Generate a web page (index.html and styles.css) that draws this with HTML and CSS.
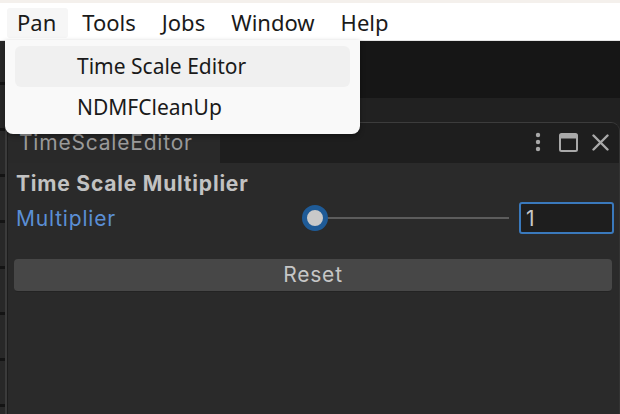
FILE: index.html
```html
<!DOCTYPE html>
<html lang="en">
<head>
<meta charset="utf-8">
<title>TimeScaleEditor</title>
<link rel="stylesheet" href="styles.css">
</head>
<body>
<div class="app">
  <header class="menubar">
    <span class="menu-item is-open">Pan</span>
    <span class="menu-item">Tools</span>
    <span class="menu-item">Jobs</span>
    <span class="menu-item">Window</span>
    <span class="menu-item">Help</span>
  </header>

  <ul class="dropdown">
    <li class="dropdown-item is-hover">Time Scale Editor</li>
    <li class="dropdown-item">NDMFCleanUp</li>
  </ul>

  <div class="workspace">
    <div class="side-strip"></div>
    <div class="main">
      <div class="toolbar"></div>
      <div class="toolbar-gap"></div>
      <section class="panel">
        <div class="tabbar">
          <div class="tab">TimeScaleEditor</div>
          <div class="tab-actions">
            <svg class="icon" width="8" height="20" viewBox="0 0 8 20" aria-hidden="true">
              <circle cx="4" cy="3" r="2.2" fill="#a9a9a9"/>
              <circle cx="4" cy="10" r="2.2" fill="#a9a9a9"/>
              <circle cx="4" cy="17" r="2.2" fill="#a9a9a9"/>
            </svg>
            <svg class="icon" width="19" height="19" viewBox="0 0 19 19" aria-hidden="true">
              <rect x="1" y="1" width="17" height="17" rx="1.5" fill="none" stroke="#a9a9a9" stroke-width="2"/>
              <rect x="1" y="1" width="17" height="4.5" fill="#a9a9a9"/>
            </svg>
            <svg class="icon" width="17" height="17" viewBox="0 0 17 17" aria-hidden="true">
              <path d="M1.5 1.5 L15.5 15.5 M15.5 1.5 L1.5 15.5" stroke="#a9a9a9" stroke-width="2.4" stroke-linecap="round"/>
            </svg>
          </div>
        </div>
        <div class="panel-body">
          <div class="section-title">Time Scale Multiplier</div>
          <div class="field-row">
            <label class="field-label">Multiplier</label>
            <div class="slider">
              <span class="slider-thumb"></span>
              <span class="slider-track"></span>
            </div>
            <div class="number-field">1</div>
          </div>
          <button class="reset-button" type="button">Reset</button>
        </div>
      </section>
    </div>
  </div>
</div>
</body>
</html>
```
FILE: styles.css
```css
* {
  box-sizing: border-box;
}

html, body {
  margin: 0;
  padding: 0;
}

body {
  width: 620px;
  height: 414px;
  overflow: hidden;
  background: #222222;
}

.app {
  position: relative;
  display: flex;
  flex-direction: column;
  height: 414px;
}

/* ---------- menu bar ---------- */
.menubar {
  height: 41px;
  flex: none;
  display: flex;
  align-items: stretch;
  padding: 5px 0 2px 7px;
  background: #ffffff;
  border-top: 3px solid #f4f0ec;
  border-bottom: 1px solid #e4e4e4;
  font-family: "Noto Sans", "Open Sans", sans-serif;
  font-size: 22px;
  color: #1a1a1a;
}

.menu-item {
  display: flex;
  align-items: center;
  padding: 0 12px 3px 10px;
  margin-right: 4px;
  border-radius: 3px;
}

.menu-item.is-open {
  background: #f6f6f6;
}

/* ---------- dropdown ---------- */
.dropdown {
  position: absolute;
  left: 5px;
  top: 40px;
  width: 355px;
  margin: 0;
  padding: 6px 10px 6px 10px;
  list-style: none;
  background: #f9f9f9;
  border-radius: 0 0 8px 8px;
  box-shadow: 0 2px 5px rgba(0, 0, 0, 0.35);
  font-family: "Noto Sans", "Open Sans", sans-serif;
  font-size: 21px;
  color: #1a1a1a;
  z-index: 2;
}

.dropdown-item {
  height: 41px;
  display: flex;
  align-items: center;
  padding: 0 0 2px 62px;
  border-radius: 6px;
}

.dropdown-item.is-hover {
  background: #f0f0f0;
}

/* ---------- editor workspace ---------- */
.workspace {
  flex: 1;
  display: flex;
  min-height: 0;
}

.side-strip {
  width: 8px;
  flex: none;
  background:
    linear-gradient(to right, transparent 0, transparent 5px, #3b3b3b 5px, #3b3b3b 7px, #1d1d1d 7px),
    repeating-linear-gradient(to bottom, #282828 0, #282828 43px, #141414 43px, #141414 46px);
  background-position: 0 0, 0 -2px;
}

.main {
  flex: 1;
  display: flex;
  flex-direction: column;
  min-width: 0;
}

.toolbar {
  height: 57px;
  flex: none;
  background: #161616;
}

.toolbar-gap {
  height: 24px;
  flex: none;
  background: #212121;
}

.panel {
  flex: 1;
  display: flex;
  flex-direction: column;
  border-top: 1px solid #3c3c3c;
  border-right: 1px solid #333333;
  border-top-right-radius: 9px;
  background: #2a2a2a;
  font-family: Inter, "Noto Sans", sans-serif;
  letter-spacing: 0.8px;
}

.tabbar {
  height: 40px;
  flex: none;
  display: flex;
  align-items: stretch;
  background: #1e1e1e;
  border-top-right-radius: 8px;
}

.tab {
  width: 212px;
  display: flex;
  align-items: center;
  padding: 0 0 1px 11px;
  background: #292929;
  color: #9a9a9a;
  font-size: 21px;
}

.tab-actions {
  flex: 1;
  display: flex;
  align-items: center;
  justify-content: flex-end;
  padding: 0 10px 2px 0;
}

.icon {
  display: block;
  flex: none;
}

.tab-actions .icon:nth-child(1) {
  margin-right: 17px;
}

.tab-actions .icon:nth-child(2) {
  margin-right: 14px;
}

/* ---------- panel content ---------- */
.panel-body {
  flex: 1;
  display: flex;
  flex-direction: column;
  padding: 6px 6px 0 6px;
}

.section-title {
  height: 28px;
  padding-left: 2px;
  display: flex;
  align-items: center;
  font-weight: 700;
  font-size: 21px;
  color: #c2c2c2;
}

.field-row {
  height: 42px;
  display: flex;
  align-items: center;
}

.field-label {
  flex: none;
  width: 288px;
  padding-left: 2px;
  font-size: 21px;
  color: #5b8fd5;
}

.slider {
  flex: none;
  position: relative;
  width: 207px;
  height: 28px;
  display: flex;
  align-items: center;
}

.slider-track {
  flex: 1;
  height: 2px;
  margin-left: 13px;
  background: #5c5c5c;
}

.slider-thumb {
  position: absolute;
  left: 0;
  top: 1px;
  width: 26px;
  height: 26px;
  border-radius: 50%;
  background: #c9c9c9;
  border: 5px solid #1f5b97;
}

.number-field {
  flex: none;
  width: 95px;
  height: 32px;
  margin-left: 10px;
  padding: 0 0 0 5px;
  display: flex;
  align-items: center;
  background: #1e1e1e;
  border: 2px solid #3a79bc;
  border-radius: 3px;
  color: #c8c8c8;
  font-size: 21px;
}

.reset-button {
  margin: 20px 0 0 0;
  height: 33px;
  width: 598px;
  padding: 0 0 2px 0;
  background: #474747;
  border: none;
  border-bottom: 1px solid #232323;
  border-radius: 4px;
  color: #c6c6c6;
  font-family: Inter, "Noto Sans", sans-serif;
  font-size: 21px;
  letter-spacing: 0.8px;
}
```
